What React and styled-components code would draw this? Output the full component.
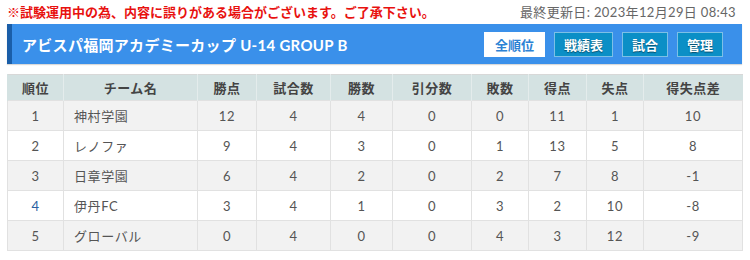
import React from "react";
import styled, { createGlobalStyle } from "styled-components";

const Global = createGlobalStyle`
  html, body { margin: 0; padding: 0; background: #fff; }
  body { font-family: Lato, "Noto Sans CJK JP", sans-serif; }
`;

const Page = styled.div`
  padding: 1px 8px 0 7px;
  width: 735px;
`;

const TopLine = styled.div`
  display: flex;
  justify-content: space-between;
  align-items: center;
  height: 21px;
  padding-right: 6px;
`;

const Notice = styled.span`
  color: #e8110f;
  font-weight: bold;
  font-size: 13px;
`;

const Updated = styled.span`
  color: #666;
  font-size: 13px;
  letter-spacing: 0.35px;
`;

const TitleBar = styled.div`
  margin-top: 2px;
  height: 40px;
  display: flex;
  align-items: center;
  justify-content: space-between;
  background: #3a90ea;
  border-left: 5px solid #1a5ea8;
  box-shadow: 0 1px 1px rgba(0, 0, 0, 0.15);
  padding: 0 19px 0 10px;
`;

const Title = styled.h1`
  margin: 0;
  color: #fff;
  font-size: 15px;
  font-weight: bold;
  letter-spacing: 0.3px;
`;

const Nav = styled.div`
  display: flex;
  gap: 9px;
`;

const NavButton = styled.a`
  display: flex;
  align-items: center;
  justify-content: center;
  height: 25px;
  box-sizing: border-box;
  padding: 0 ${(p) => p.$pad}px;
  font-size: 13px;
  font-weight: bold;
  text-decoration: none;
  border: 1px solid ${(p) => (p.$active ? "#ffffff" : "#7cc0e6")};
  background: ${(p) => (p.$active ? "#ffffff" : "#0b8fc6")};
  color: ${(p) => (p.$active ? "#2c82d4" : "#ffffff")};
  text-shadow: ${(p) => (p.$active ? "none" : "0 1px 1px rgba(0,0,0,0.45)")};
`;

const Table = styled.table`
  margin-top: 10px;
  width: 735px;
  border-collapse: collapse;
  table-layout: fixed;
  font-size: 13px;
  border-top: 1px solid #d8d8d8;
`;

const Th = styled.th`
  height: 25px;
  padding: 0;
  background: #d4e2e2;
  color: #444;
  font-weight: bold;
  letter-spacing: 0.5px;
  border-left: 1px solid #e4ecec;
  &:first-child { border-left: 1px solid #d4e2e2; }
`;

const Row = styled.tr`
  background: ${(p) => (p.$odd ? "#f2f2f2" : "#ffffff")};
`;

const Td = styled.td`
  height: 29px;
  padding: 0 ${(p) => (p.$left ? "10px" : "0")};
  text-align: ${(p) => (p.$left ? "left" : "center")};
  color: ${(p) => (p.$blue ? "#2a5fa0" : "#555")};
  letter-spacing: 0.6px;
  border: 1px solid #e1e1e1;
`;

const cols = [56, 134, 59, 74, 62, 79, 57, 58, 57, 99];
const heads = ["順位", "チーム名", "勝点", "試合数", "勝数", "引分数", "敗数", "得点", "失点", "得失点差"];
const rows = [
  ["1", "神村学園", 12, 4, 4, 0, 0, 11, 1, 10],
  ["2", "レノファ", 9, 4, 3, 0, 1, 13, 5, 8],
  ["3", "日章学園", 6, 4, 2, 0, 2, 7, 8, -1],
  ["4", "伊丹FC", 3, 4, 1, 0, 3, 2, 10, -8],
  ["5", "グローバル", 0, 4, 0, 0, 4, 3, 12, -9],
];

export default function App() {
  return (
    <Page>
      <Global />
      <TopLine>
        <Notice>※試験運用中の為、内容に誤りがある場合がございます。ご了承下さい。</Notice>
        <Updated>最終更新日: 2023年12月29日 08:43</Updated>
      </TopLine>
      <TitleBar>
        <Title>アビスパ福岡アカデミーカップ U-14 GROUP B</Title>
        <Nav>
          <NavButton $active $pad={10}>全順位</NavButton>
          <NavButton $pad={9}>戦績表</NavButton>
          <NavButton $pad={9}>試合</NavButton>
          <NavButton $pad={9}>管理</NavButton>
        </Nav>
      </TitleBar>
      <Table>
        <colgroup>
          {cols.map((w, i) => (
            <col key={i} style={{ width: w }} />
          ))}
        </colgroup>
        <thead>
          <tr>
            {heads.map((h) => (
              <Th key={h}>{h}</Th>
            ))}
          </tr>
        </thead>
        <tbody>
          {rows.map((r, i) => (
            <Row key={r[0]} $odd={i % 2 === 0}>
              {r.map((c, j) => (
                <Td key={j} $left={j === 1} $blue={j === 0 && r[0] === "4"}>
                  {c}
                </Td>
              ))}
            </Row>
          ))}
        </tbody>
      </Table>
    </Page>
  );
}
